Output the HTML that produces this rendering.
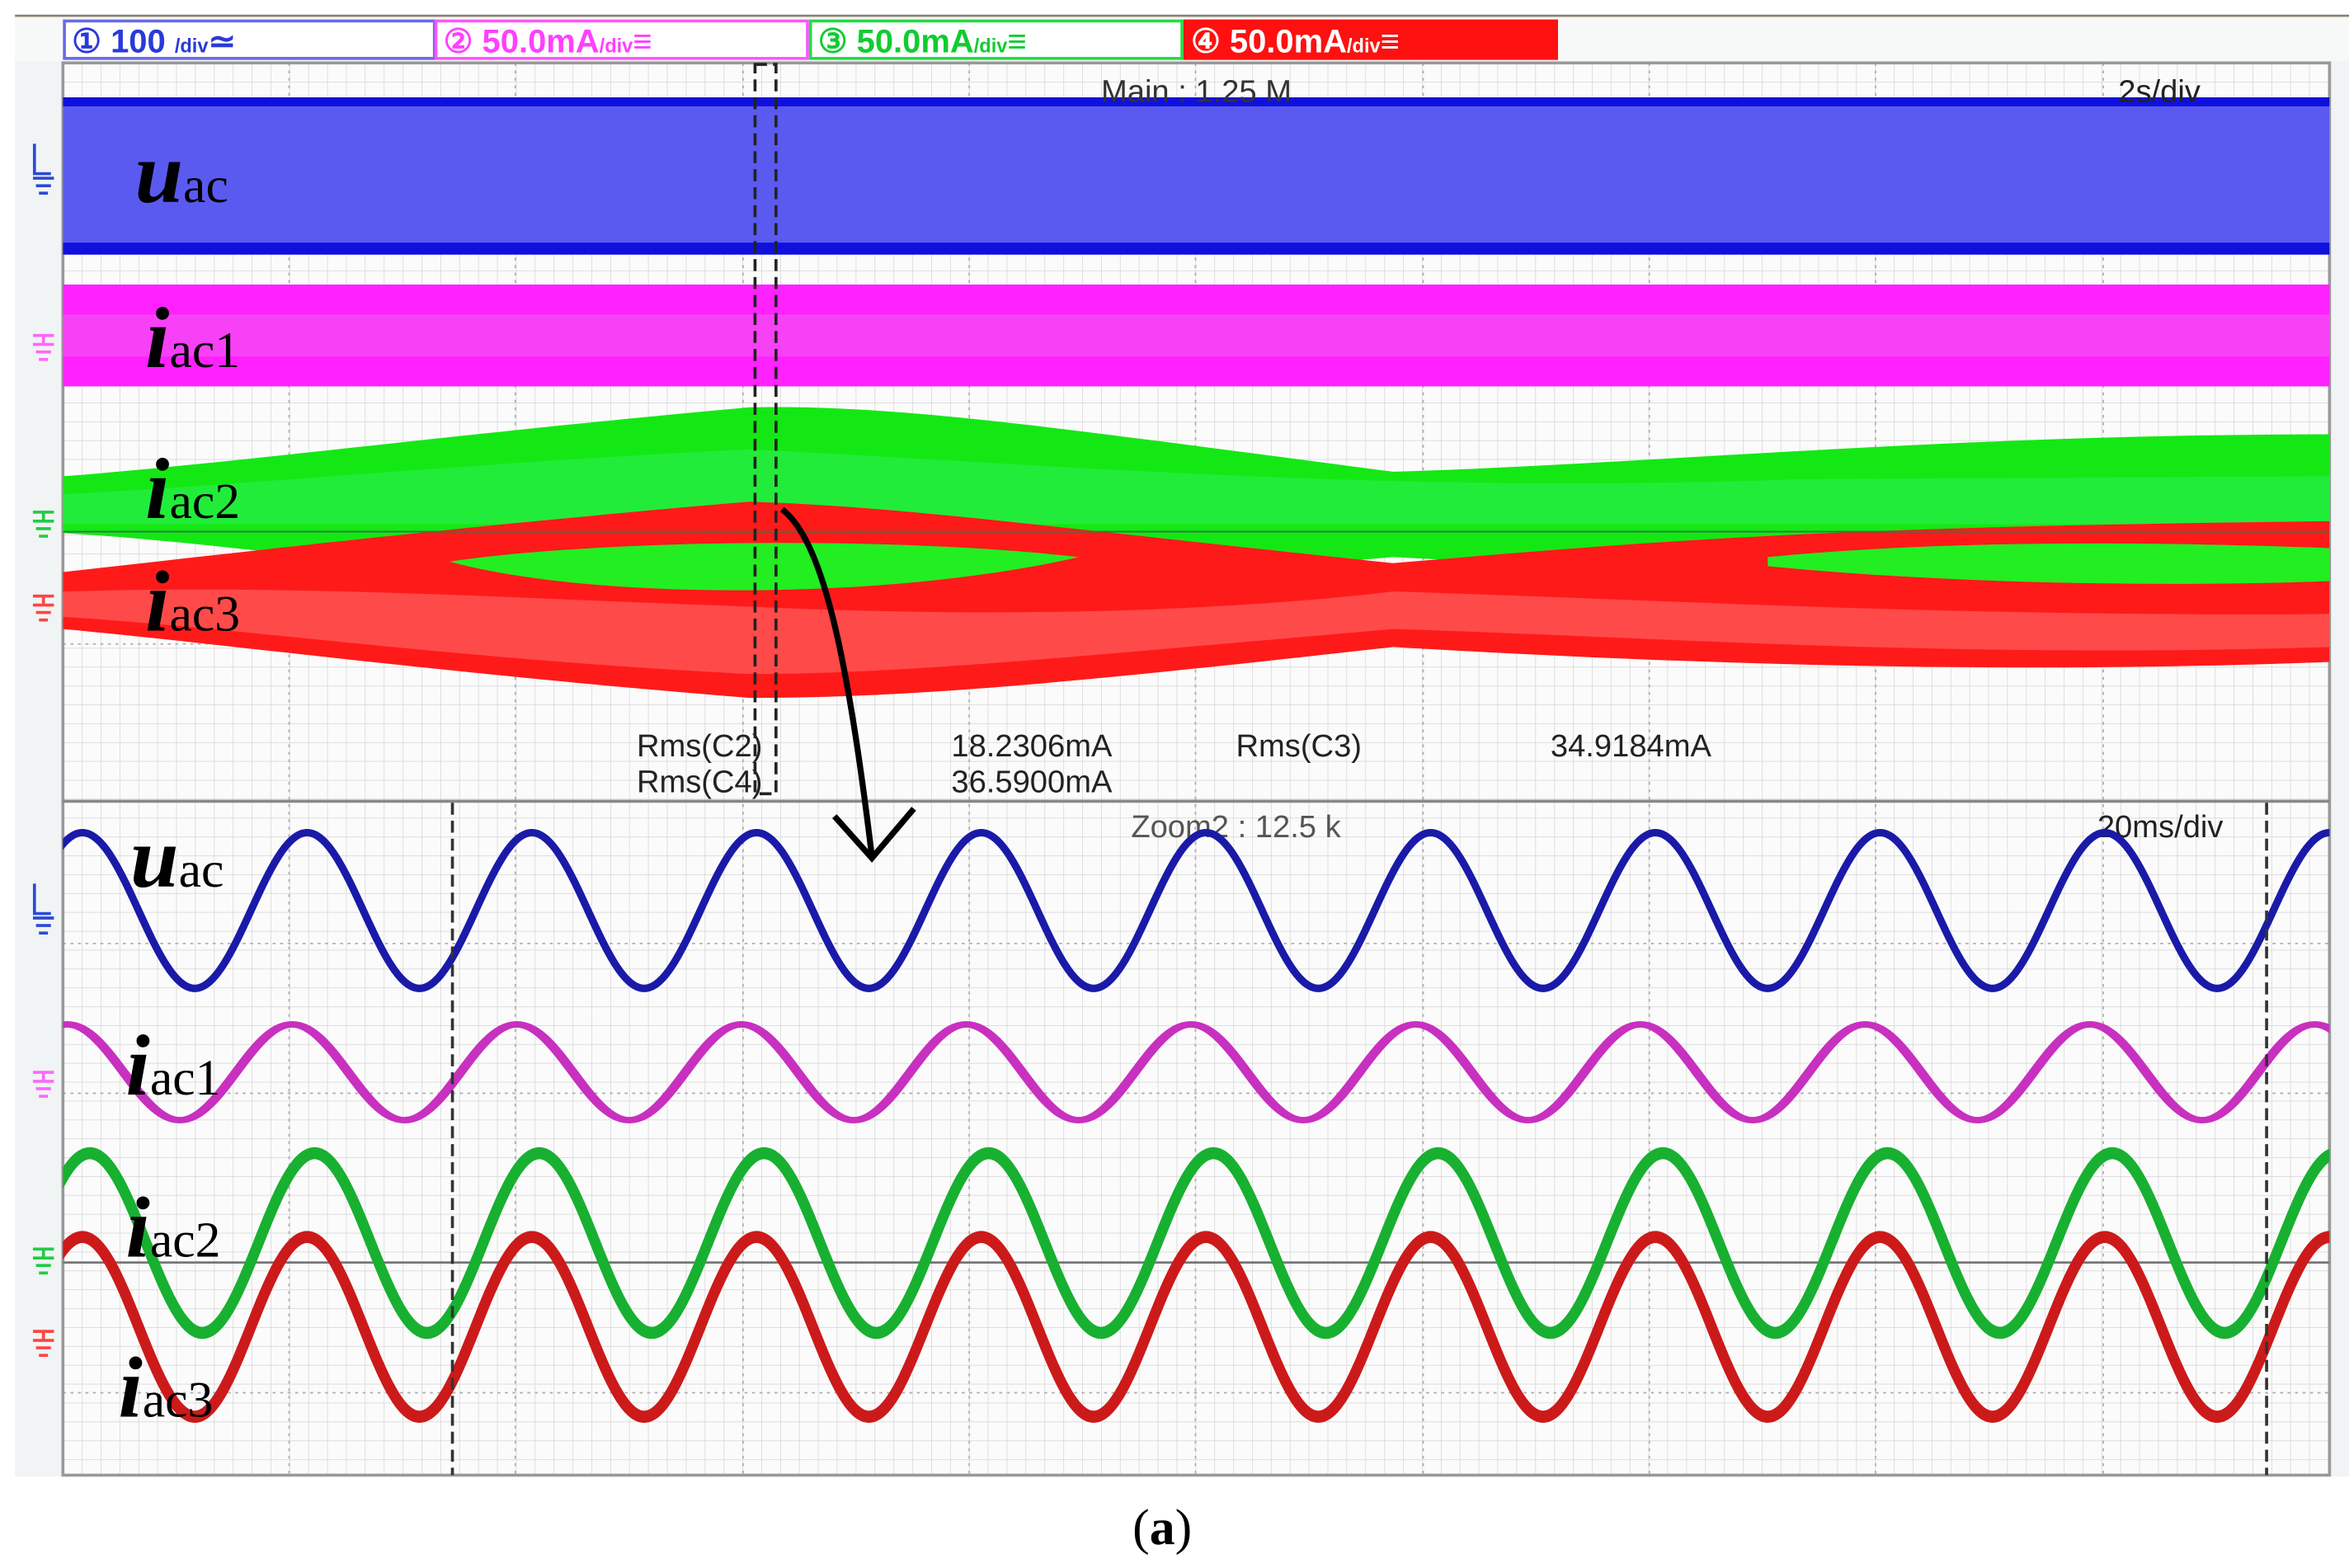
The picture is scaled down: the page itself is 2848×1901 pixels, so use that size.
<!DOCTYPE html>
<html><head><meta charset="utf-8"><style>
html,body{margin:0;padding:0;background:#fff;}
svg{display:block;}
</style></head><body>
<svg width="2848" height="1901" viewBox="0 0 1568 1047" preserveAspectRatio="none" xmlns="http://www.w3.org/2000/svg">
<defs>
<pattern id="g" x="42" y="42" width="12.6" height="12.6" patternUnits="userSpaceOnUse">
<rect width="12.6" height="12.6" fill="#fbfbfb"/>
<path d="M0 0H12.6M0 0V12.6" stroke="#d4d4d4" stroke-width="0.8"/>
</pattern>
<clipPath id="c1"><rect x="42" y="42" width="1513" height="493"/></clipPath>
<clipPath id="c2"><rect x="42" y="536" width="1513" height="449"/></clipPath>
<path id="s" d="M -95 556 C -67.7 556 -47.3 660 -20 660 S 27.7 556 55 556 S 102.7 660 130 660 S 177.7 556 205 556 S 252.7 660 280 660 S 327.7 556 355 556 S 402.7 660 430 660 S 477.7 556 505 556 S 552.7 660 580 660 S 627.7 556 655 556 S 702.7 660 730 660 S 777.7 556 805 556 S 852.7 660 880 660 S 927.7 556 955 556 S 1002.7 660 1030 660 S 1077.7 556 1105 556 S 1152.7 660 1180 660 S 1227.7 556 1255 556 S 1302.7 660 1330 660 S 1377.7 556 1405 556 S 1452.7 660 1480 660 S 1527.7 556 1555 556 S 1602.7 660 1630 660" fill="none"/>
</defs>
<rect width="1568" height="1047" fill="#fff"/>
<rect x="10" y="10" width="1558" height="976" fill="#f1f4f4"/>
<line x1="10" y1="10.5" x2="1568" y2="10.5" stroke="#8a8070" stroke-width="1.5"/>
<rect x="10" y="12" width="1558" height="29" fill="#f7f9f9"/>
<rect x="43" y="14" width="247" height="25" fill="#fff" stroke="#6a6ae8" stroke-width="2"/>
<rect x="291" y="14" width="248" height="25" fill="#fff" stroke="#ff55ff" stroke-width="2"/>
<rect x="541" y="14" width="248" height="25" fill="#fff" stroke="#22dd44" stroke-width="2"/>
<rect x="790" y="13" width="250" height="27" fill="#ff1010"/>
<g font-family="Liberation Sans Narrow, Liberation Sans, sans-serif" font-size="22" font-weight="bold">
<text x="48" y="35" fill="#2a3ad8">① 100 <tspan font-size="13">/div</tspan>≃</text>
<text x="296" y="35" fill="#ff40ff">② 50.0mA<tspan font-size="13">/div</tspan>≡</text>
<text x="546" y="35" fill="#10cc30">③ 50.0mA<tspan font-size="13">/div</tspan>≡</text>
<text x="795" y="35" fill="#fff">④ 50.0mA<tspan font-size="13">/div</tspan>≡</text>
</g>
<rect x="42" y="42" width="1513" height="943" fill="url(#g)"/>
<g stroke="#b0b0b0" stroke-width="1" stroke-dasharray="2 3">
<line x1="193" y1="42" x2="193" y2="985"/><line x1="344" y1="42" x2="344" y2="985"/><line x1="496" y1="42" x2="496" y2="985"/><line x1="647" y1="42" x2="647" y2="985"/><line x1="798" y1="42" x2="798" y2="985"/><line x1="950" y1="42" x2="950" y2="985"/><line x1="1101" y1="42" x2="1101" y2="985"/><line x1="1252" y1="42" x2="1252" y2="985"/><line x1="1404" y1="42" x2="1404" y2="985"/>
<line x1="42" y1="130" x2="1555" y2="130"/><line x1="42" y1="230" x2="1555" y2="230"/><line x1="42" y1="430" x2="1555" y2="430"/><line x1="42" y1="630" x2="1555" y2="630"/><line x1="42" y1="730" x2="1555" y2="730"/><line x1="42" y1="930" x2="1555" y2="930"/>
</g>
<rect x="42" y="42" width="1513" height="943" fill="none" stroke="#999" stroke-width="2"/>
<line x1="42" y1="535" x2="1555" y2="535" stroke="#888" stroke-width="2"/>
<g clip-path="url(#c1)">
<rect x="42" y="65" width="1513" height="105" fill="#5a5af0"/>
<rect x="42" y="65" width="1513" height="6" fill="#1010dd"/>
<rect x="42" y="162" width="1513" height="8" fill="#1010dd"/>
<rect x="42" y="190" width="1513" height="68" fill="#ff22ff"/>
<rect x="42" y="210" width="1513" height="28" fill="#f060f0" opacity="0.5"/>
<path d="M42 318 C150 310 300 290 500 272 C600 270 700 285 930 315 C1100 310 1300 290 1555 290 L1555 392 C1300 388 1200 386 930 372 C700 392 600 402 500 402 C300 385 150 362 42 356 Z" fill="#14e814"/>
<path d="M42 330 C150 325 300 310 500 300 C700 310 930 330 1200 320 L1555 318 L1555 350 L42 350Z" fill="#30f060" opacity="0.5"/>
<path d="M42 382 C150 370 300 352 500 335 C600 338 700 352 930 376 C1100 362 1200 352 1555 348 L1555 442 C1400 448 1200 448 930 432 C700 458 600 466 500 466 C300 450 150 430 42 420 Z" fill="#ff1a1a"/>
<path d="M42 395 C200 390 350 400 500 405 C650 412 800 410 930 395 C1100 400 1300 412 1555 410 L1555 432 C1300 440 1100 425 930 420 C700 440 600 450 500 450 C300 440 150 418 42 412 Z" fill="#ff6a6a" opacity="0.6"/>
<path d="M300 375 C400 360 600 358 720 372 C600 400 400 402 300 375Z" fill="#22ee22"/>
<path d="M1180 372 C1300 360 1450 362 1555 366 L1555 388 C1450 392 1300 390 1180 378Z" fill="#22ee22"/>
<line x1="42" y1="355" x2="1555" y2="355" stroke="#2a7a4a" stroke-width="1"/>
</g>
<rect x="504" y="43" width="14" height="487" fill="none" stroke="#222" stroke-width="2" stroke-dasharray="8 4"/>
<g font-family="Liberation Sans Narrow, Liberation Sans, sans-serif" font-size="21" fill="#222">
<text x="735" y="68" fill="#333">Main : 1.25 M</text>
<text x="1414" y="68">2s/div</text>
<text x="425" y="505">Rms(C2)</text><text x="425" y="529">Rms(C4)</text>
<text x="635" y="505">18.2306mA</text><text x="635" y="529">36.5900mA</text>
<text x="825" y="505">Rms(C3)</text><text x="1035" y="505">34.9184mA</text>
<text x="755" y="559" fill="#555">Zoom2 : 12.5 k</text>
<text x="1400" y="559">20ms/div</text>
</g>
<g clip-path="url(#c2)">
<line x1="42" y1="843" x2="1555" y2="843" stroke="#777" stroke-width="1.5"/>
<use href="#s" stroke="#1a1aa8" stroke-width="5" vector-effect="non-scaling-stroke"/>
<use href="#s" transform="translate(-10,716) scale(1,0.615) translate(0,-608)" stroke="#c830c0" stroke-width="7" vector-effect="non-scaling-stroke"/>
<use href="#s" transform="translate(5,830) scale(1,1.154) translate(0,-608)" stroke="#18b030" stroke-width="7" vector-effect="non-scaling-stroke"/>
<use href="#s" transform="translate(0,886) scale(1,1.154) translate(0,-608)" stroke="#cc1a1a" stroke-width="7" vector-effect="non-scaling-stroke"/>
</g>
<g stroke="#333" stroke-width="2" stroke-dasharray="8 4">
<line x1="302" y1="536" x2="302" y2="985"/><line x1="1513" y1="536" x2="1513" y2="985"/>
</g>
<path d="M522 340 C548 360 565 430 582 572" fill="none" stroke="#000" stroke-width="4"/>
<path d="M557 545 L582 573 L610 540" fill="none" stroke="#000" stroke-width="4"/>
<g stroke-width="2" fill="none">
<path d="M23 96V116H34M22 119H36M24 124H34M26 129H32" stroke="#2a4ad8"/>
<path d="M22 224H36M29 224V230M22 230H36M24 235H34M26 240H32" stroke="#ff66ff"/>
<path d="M22 342H36M29 342V348M22 348H36M24 353H34M26 358H32" stroke="#22cc44"/>
<path d="M22 398H36M29 398V404M22 404H36M24 409H34M26 414H32" stroke="#ff4444"/>
<path d="M23 590V610H34M22 613H36M24 618H34M26 623H32" stroke="#2a4ad8"/>
<path d="M22 716H36M29 716V722M22 722H36M24 727H34M26 732H32" stroke="#ff66ff"/>
<path d="M22 834H36M29 834V840M22 840H36M24 845H34M26 850H32" stroke="#22cc44"/>
<path d="M22 889H36M29 889V895M22 895H36M24 900H34M26 905H32" stroke="#ff4444"/>
</g>
<g font-family="Liberation Serif, serif" fill="#000">
<text x="90" y="135"><tspan font-size="58" font-style="italic" font-weight="bold">u</tspan><tspan font-size="34">ac</tspan></text>
<text x="97" y="245"><tspan font-size="58" font-style="italic" font-weight="bold">i</tspan><tspan font-size="34">ac1</tspan></text>
<text x="97" y="346"><tspan font-size="58" font-style="italic" font-weight="bold">i</tspan><tspan font-size="34">ac2</tspan></text>
<text x="97" y="421"><tspan font-size="58" font-style="italic" font-weight="bold">i</tspan><tspan font-size="34">ac3</tspan></text>
<text x="87" y="592"><tspan font-size="58" font-style="italic" font-weight="bold">u</tspan><tspan font-size="34">ac</tspan></text>
<text x="84" y="731"><tspan font-size="58" font-style="italic" font-weight="bold">i</tspan><tspan font-size="34">ac1</tspan></text>
<text x="84" y="839"><tspan font-size="58" font-style="italic" font-weight="bold">i</tspan><tspan font-size="34">ac2</tspan></text>
<text x="79" y="946"><tspan font-size="58" font-style="italic" font-weight="bold">i</tspan><tspan font-size="34">ac3</tspan></text>
<text x="756" y="1031" font-size="34">(<tspan font-weight="bold">a</tspan>)</text>
</g>
</svg>
</body></html>
